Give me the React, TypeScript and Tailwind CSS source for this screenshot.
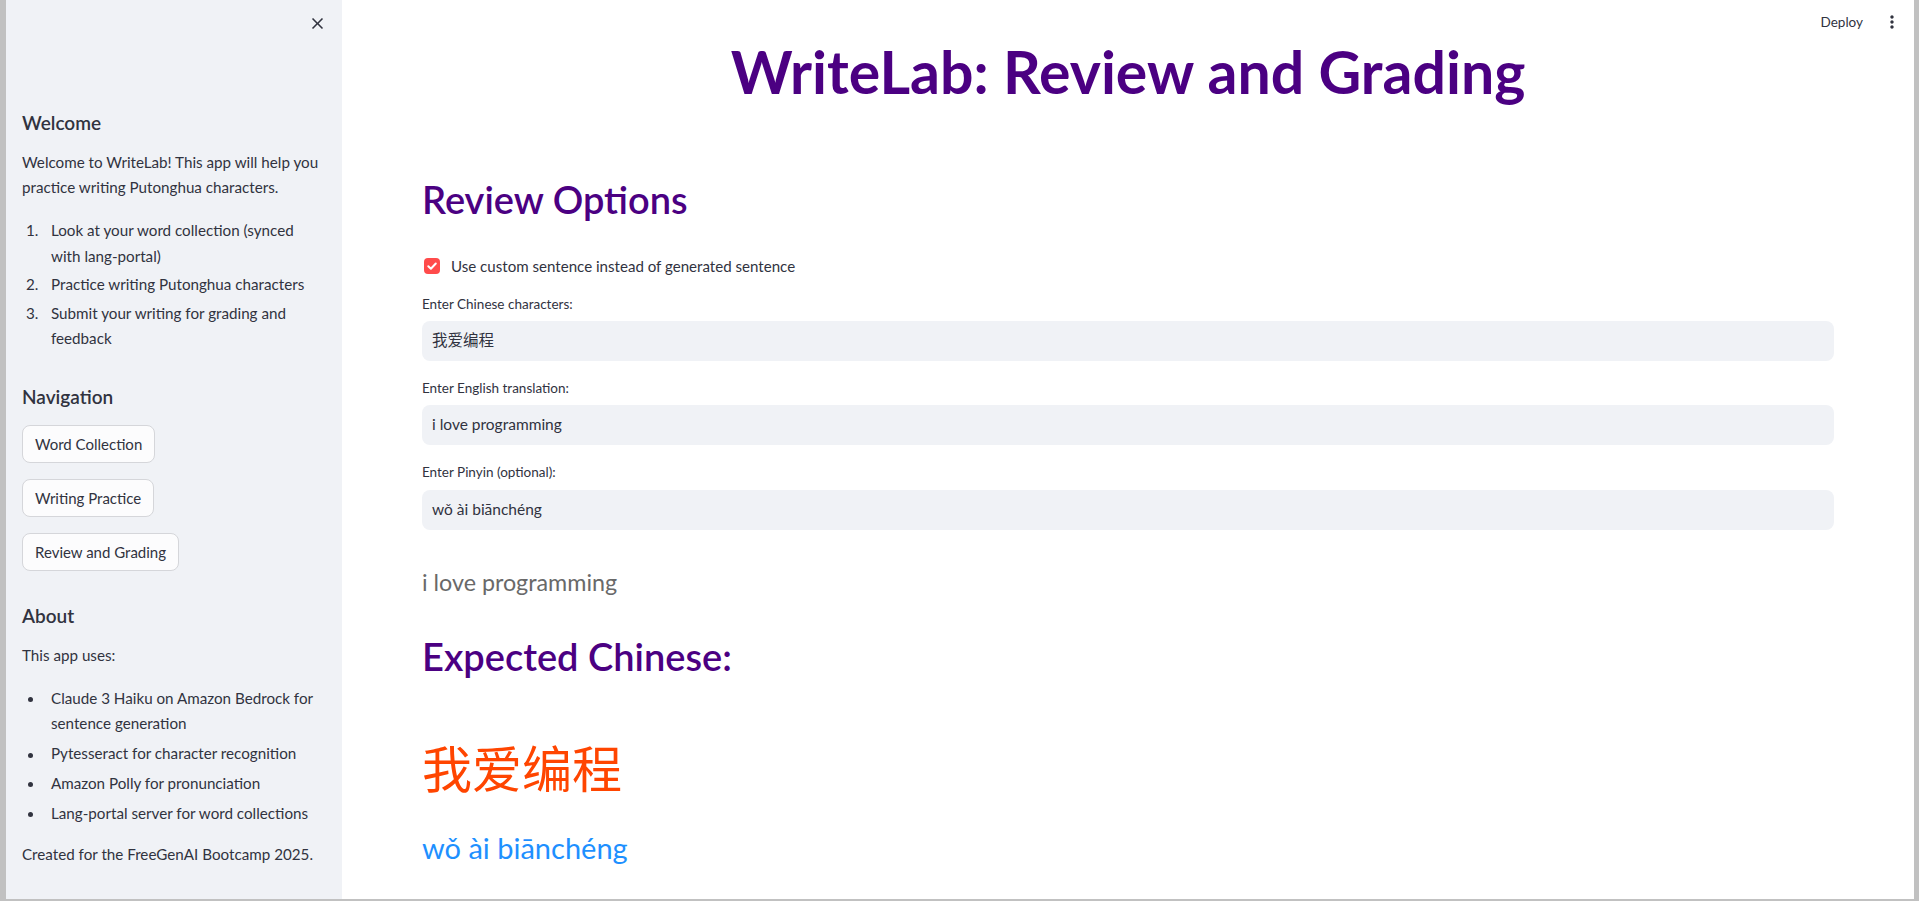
import React from "react";

const sideText = "text-[15.2px] leading-[25.6px] text-[#31333f]";

function CloseIcon() {
  return (
    <svg width="19" height="19" viewBox="0 0 24 24" fill="#31333f">
      <path d="M19 6.41L17.59 5 12 10.59 6.41 5 5 6.41 10.59 12 5 17.59 6.41 19 12 13.41 17.59 19 19 17.59 13.41 12z" />
    </svg>
  );
}

function MoreIcon() {
  return (
    <svg width="20" height="20" viewBox="0 0 24 24" fill="#31333f">
      <path d="M12 8c1.1 0 2-.9 2-2s-.9-2-2-2-2 .9-2 2 .9 2 2 2zm0 2c-1.1 0-2 .9-2 2s.9 2 2 2 2-.9 2-2-.9-2-2-2zm0 6c-1.1 0-2 .9-2 2s.9 2 2 2 2-.9 2-2-.9-2-2-2z" />
    </svg>
  );
}

function NavButton({ label, mt }: { label: string; mt: string }) {
  return (
    <div
      className={`${mt} flex h-[38px] shrink-0 items-center self-start rounded-[8px] border border-[#d5d6da] bg-[#fcfcfd] px-[12px] text-[15px] text-[#31333f]`}
    >
      {label}
    </div>
  );
}

function Field({ label, value, mtLabel, mtInput }: { label: string; value: string; mtLabel: string; mtInput: string }) {
  return (
    <>
      <div className={`${mtLabel} h-[20px] text-[13.5px] leading-[20px] text-[#31333f]`}>{label}</div>
      <div
        className={`${mtInput} flex h-[40px] items-center rounded-[8px] bg-[#f0f2f6] pl-[10px] font-['Lato','Noto_Sans_CJK_SC',sans-serif] text-[15.5px] text-[#31333f]`}
      >
        {value}
      </div>
    </>
  );
}

export default function App() {
  return (
    <div className="flex h-[901px] w-full overflow-hidden bg-[#c1c1c1] pb-[2px] pl-[6px] pr-[5px] font-['Lato',sans-serif]">
      <aside className="flex w-[336px] shrink-0 flex-col bg-[#f0f2f6] pl-[16px] pr-[12px] text-[#31333f]">
        <div className="flex h-[46px] shrink-0 items-center justify-end pr-[3px]">
          <CloseIcon />
        </div>

        <div className="mt-[61.5px] text-[19px] font-semibold leading-[30px]">Welcome</div>
        <div className={`mt-[12px] ${sideText}`}>
          Welcome to WriteLab! This app will help you
          <br />
          practice writing Putonghua characters.
        </div>

        <div className={`mt-[17.5px] flex flex-col gap-[2.8px] ${sideText}`}>
          <div className="flex">
            <span className="w-[29px] shrink-0 pl-[4px]">1.</span>
            <span>
              Look at your word collection (synced
              <br />
              with lang-portal)
            </span>
          </div>
          <div className="flex">
            <span className="w-[29px] shrink-0 pl-[4px]">2.</span>
            <span>Practice writing Putonghua characters</span>
          </div>
          <div className="flex">
            <span className="w-[29px] shrink-0 pl-[4px]">3.</span>
            <span>
              Submit your writing for grading and
              <br />
              feedback
            </span>
          </div>
        </div>

        <div className="mt-[30.3px] text-[19px] font-semibold leading-[30px]">Navigation</div>
        <NavButton label="Word Collection" mt="mt-[13px]" />
        <NavButton label="Writing Practice" mt="mt-[16px]" />
        <NavButton label="Review and Grading" mt="mt-[16px]" />

        <div className="mt-[30px] text-[19px] font-semibold leading-[30px]">About</div>
        <div className={`mt-[11.7px] ${sideText}`}>This app uses:</div>
        <div className={`mt-[17.3px] flex flex-col gap-[4.2px] ${sideText}`}>
          {[
            ["Claude 3 Haiku on Amazon Bedrock for", "sentence generation"],
            ["Pytesseract for character recognition"],
            ["Amazon Polly for pronunciation"],
            ["Lang-portal server for word collections"],
          ].map((lines, i) => (
            <div key={i} className="flex">
              <span className="flex w-[29px] shrink-0 pl-[6px] pt-[11.5px]">
                <span className="h-[5px] w-[5px] rounded-full bg-[#31333f]" />
              </span>
              <span>
                {lines[0]}
                {lines[1] && (
                  <>
                    <br />
                    {lines[1]}
                  </>
                )}
              </span>
            </div>
          ))}
        </div>
        <div className={`mt-[15.6px] ${sideText}`}>Created for the FreeGenAI Bootcamp 2025.</div>
      </aside>

      <main className="flex min-w-0 flex-1 flex-col overflow-hidden bg-white">
        <div className="flex h-[44px] shrink-0 items-center justify-end gap-[19px] pr-[12px]">
          <span className="text-[13.5px] text-[#31333f]">Deploy</span>
          <MoreIcon />
        </div>

        <div className="flex flex-col px-[80px]">
          <h1 className="text-center text-[59px] font-bold leading-[56px] text-[#4b0082]">
            WriteLab: Review and Grading
          </h1>

          <h2 className="mt-[74px] text-[38px] font-semibold leading-[50px] text-[#4b0082]">Review Options</h2>

          <div className="mt-[30px] flex h-[24px] items-center pl-[2px]">
            <span className="flex h-[16px] w-[16px] items-center justify-center rounded-[4px] bg-[#ff4b4b]">
              <svg width="12" height="12" viewBox="0 0 12 12" fill="none">
                <path d="M2.3 6.2 L4.9 8.7 L9.8 3.5" stroke="white" strokeWidth="2" strokeLinecap="round" strokeLinejoin="round" />
              </svg>
            </span>
            <span className="ml-[11px] text-[15.1px] text-[#31333f]">
              Use custom sentence instead of generated sentence
            </span>
          </div>

          <Field label="Enter Chinese characters:" value="我爱编程" mtLabel="mt-[16px]" mtInput="mt-[7px]" />
          <Field label="Enter English translation:" value="i love programming" mtLabel="mt-[17px]" mtInput="mt-[7px]" />
          <Field label="Enter Pinyin (optional):" value="wǒ ài biānchéng" mtLabel="mt-[17px]" mtInput="mt-[8px]" />

          <div className="mt-[36px] text-[23.3px] leading-[32px] text-[#696969]">i love programming</div>

          <h2 className="mt-[33px] text-[38px] font-semibold leading-[50px] text-[#4b0082]">Expected Chinese:</h2>

          <div className="mt-[50px] font-['Noto_Sans_CJK_SC',sans-serif] text-[50px] leading-[70px] text-[#ff4500]">
            我爱编程
          </div>

          <div className="mt-[27px] text-[29px] leading-[40px] text-[#1e90ff]">wǒ ài biānchéng</div>
        </div>
      </main>
    </div>
  );
}
